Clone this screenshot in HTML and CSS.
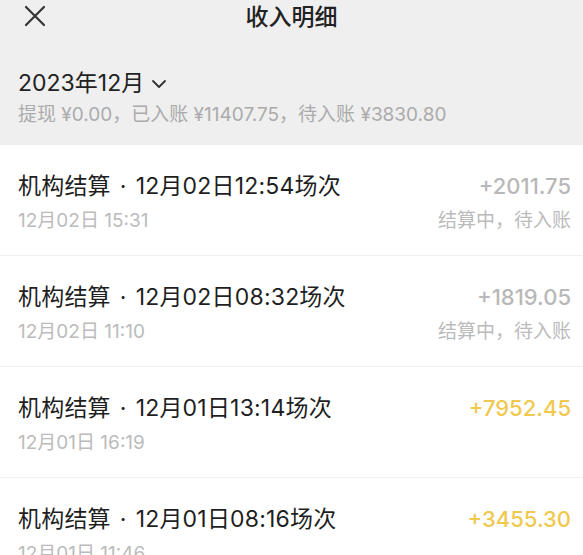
FILE: index.html
```html
<!DOCTYPE html>
<html lang="zh">
<head>
<meta charset="utf-8">
<link rel="stylesheet" href="styles.css">
</head>
<body>
<div class="page">
  <header class="topbar">
    <span class="close">
      <svg width="22" height="22" viewBox="0 0 22 22"><path d="M2 2L20 20M20 2L2 20" stroke="#333" stroke-width="2.2" stroke-linecap="round" fill="none"/></svg>
    </span>
    <h1 class="title">收入明细</h1>
  </header>
  <section class="summary">
    <div class="month">2023年12月<svg class="chev" width="16" height="10" viewBox="0 0 16 10"><path d="M2 2L8 8L14 2" stroke="#333" stroke-width="1.8" fill="none" stroke-linecap="round" stroke-linejoin="round"/></svg></div>
    <div class="totals">提现 ¥0.00，已入账 ¥11407.75，待入账 ¥3830.80</div>
  </section>
  <ul class="list">
    <li class="row">
      <div class="line"><span class="name">机构结算<span class="dot">·</span>12月02日12:54场次</span><span class="amt pending">+2011.75</span></div>
      <div class="line sub"><span>12月02日 15:31</span><span>结算中，待入账</span></div>
    </li>
    <li class="row">
      <div class="line"><span class="name">机构结算<span class="dot">·</span>12月02日08:32场次</span><span class="amt pending">+1819.05</span></div>
      <div class="line sub"><span>12月02日 11:10</span><span>结算中，待入账</span></div>
    </li>
    <li class="row">
      <div class="line"><span class="name">机构结算<span class="dot">·</span>12月01日13:14场次</span><span class="amt done">+7952.45</span></div>
      <div class="line sub"><span>12月01日 16:19</span></div>
    </li>
    <li class="row">
      <div class="line"><span class="name">机构结算<span class="dot">·</span>12月01日08:16场次</span><span class="amt done">+3455.30</span></div>
      <div class="line sub"><span>12月01日 11:46</span></div>
    </li>
  </ul>
</div>
</body>
</html>
```
FILE: styles.css
```css
* { box-sizing: border-box; }
html, body { margin: 0; padding: 0; }
body {
  width: 583px;
  height: 555px;
  overflow: hidden;
  background: #ffffff;
  font-family: "Inter", "Noto Sans CJK SC", sans-serif;
  color: #222;
}
.page { width: 583px; }
.topbar {
  background: #efefef;
  height: 36px;
  display: flex;
  align-items: center;
  justify-content: center;
  position: relative;
}
.close {
  position: absolute;
  left: 24px;
  top: 5px;
  width: 22px;
  height: 22px;
  display: flex;
}
.title {
  margin: 0;
  font-size: 23px;
  font-weight: 500;
  line-height: 30px;
  color: #222;
  margin-top: -3px;
}
.summary {
  background: #efefef;
  height: 109px;
  padding: 32px 18px 0 18px;
}
.month {
  font-size: 23px;
  line-height: 30px;
  display: flex;
  align-items: center;
  color: #222;
}
.chev { margin-left: 7px; margin-top: 2px; }
.totals {
  margin-top: 4px;
  font-size: 19px;
  line-height: 26px;
  color: #ababab;
}
.list { list-style: none; margin: 0; padding: 0; }
.row {
  height: 111px;
  padding: 27px 12px 0 18px;
  border-bottom: 1px solid #f0f0f0;
}
.line {
  display: flex;
  justify-content: space-between;
  align-items: center;
}
.name {
  font-size: 23px;
  line-height: 28px;
  color: #1f1f1f;
  letter-spacing: 0.2px;
}
.dot { margin: 0 9px 0 9px; }
.amt {
  font-size: 22px;
  line-height: 28px;
  font-weight: 500;
}
.pending { color: #b8b8b8; }
.done { color: #f0c850; }
.sub {
  margin-top: 9px;
  font-size: 19px;
  line-height: 24px;
  color: #bbbbbb;
}
```
